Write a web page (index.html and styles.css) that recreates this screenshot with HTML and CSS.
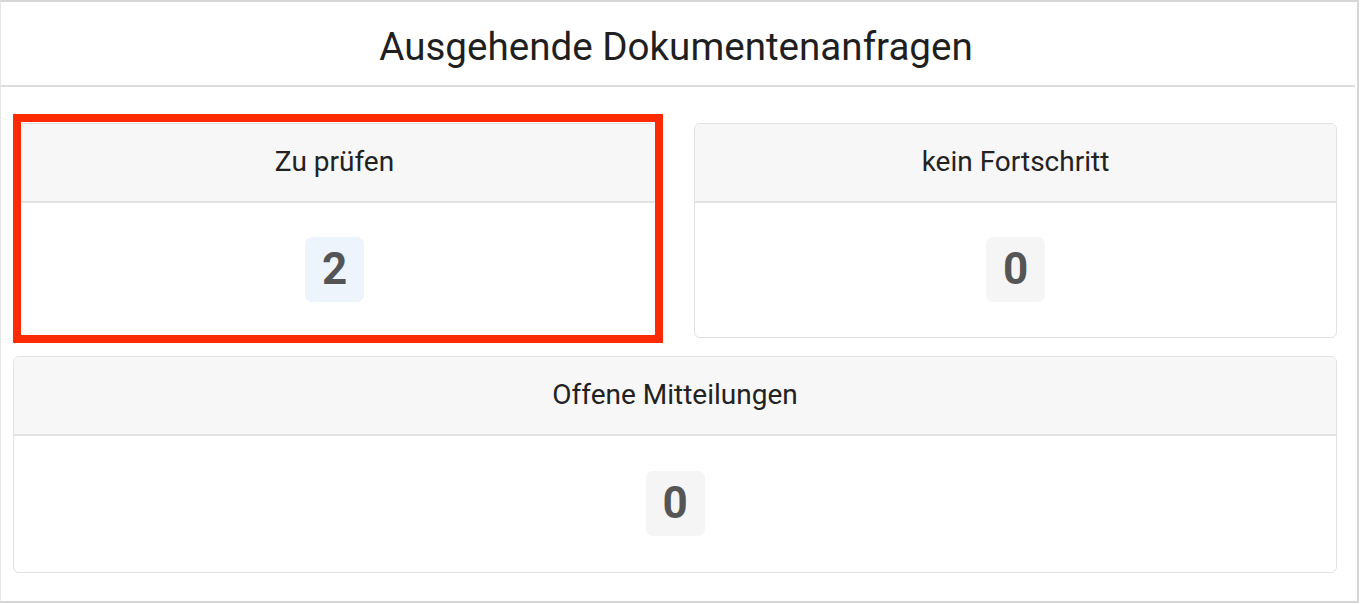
FILE: index.html
```html
<!DOCTYPE html>
<html lang="de">
<head>
<meta charset="utf-8">
<title>Ausgehende Dokumentenanfragen</title>
<link rel="stylesheet" href="styles.css">
</head>
<body>
<div class="panel">
  <div class="panel-head">Ausgehende Dokumentenanfragen</div>
  <div class="panel-body">
    <div class="card card-highlight">
      <div class="card-head">Zu prüfen</div>
      <div class="card-body"><span class="count count-blue">2</span></div>
      <div class="mark"></div>
    </div>
    <div class="card">
      <div class="card-head">kein Fortschritt</div>
      <div class="card-body"><span class="count">0</span></div>
    </div>
    <div class="card card-wide">
      <div class="card-head">Offene Mitteilungen</div>
      <div class="card-body"><span class="count">0</span></div>
    </div>
  </div>
</div>
</body>
</html>
```
FILE: styles.css
```css
html, body {
  margin: 0;
  padding: 0;
  background: #ffffff;
}
body {
  font-family: Roboto, "Liberation Sans", sans-serif;
  color: #222222;
}
.panel {
  box-sizing: border-box;
  width: 1359px;
  height: 603px;
  border-top: 2px solid #d6d6d6;
  border-right: 2px solid #d6d6d6;
  border-bottom: 2px solid #d6d6d6;
  border-left: 1px solid #e6e6e6;
  background: #ffffff;
}
.panel-head {
  box-sizing: border-box;
  height: 85px;
  margin-right: 2px;
  border-bottom: 2px solid #dcdcdc;
  display: flex;
  align-items: center;
  justify-content: center;
  font-size: 38.6px;
  color: #1f1f1f;
  padding-top: 6px;
  padding-right: 4px;
}
.panel-body {
  display: grid;
  grid-template-columns: 643px 643px;
  column-gap: 38px;
  row-gap: 18px;
  padding: 36px 0 0 12px;
}
.card {
  position: relative;
  box-sizing: border-box;
  height: 215px;
  border: 1px solid #e2e2e2;
  border-radius: 6px;
  background: #ffffff;
  display: flex;
  flex-direction: column;
}
.card-wide {
  grid-column: 1 / 3;
  height: 217px;
}
.card-head {
  box-sizing: border-box;
  height: 79px;
  flex: none;
  background: #f7f7f7;
  border-bottom: 2px solid #e2e2e2;
  border-radius: 6px 6px 0 0;
  display: flex;
  align-items: center;
  justify-content: center;
  font-size: 28px;
  color: #222222;
  padding-bottom: 2px;
}
.card-body {
  flex: 1;
  display: flex;
  align-items: center;
  justify-content: center;
  padding-bottom: 2px;
}
.count {
  display: inline-flex;
  align-items: center;
  justify-content: center;
  width: 59px;
  height: 65px;
  border-radius: 7px;
  background: #f5f5f5;
  font-size: 44px;
  font-weight: 700;
  color: #555555;
}
.count-blue {
  background: #eef4fc;
}
.mark {
  position: absolute;
  top: -10px;
  left: -1px;
  right: -8px;
  bottom: -6px;
  border: 8px solid #ff2a00;
  pointer-events: none;
}
```
